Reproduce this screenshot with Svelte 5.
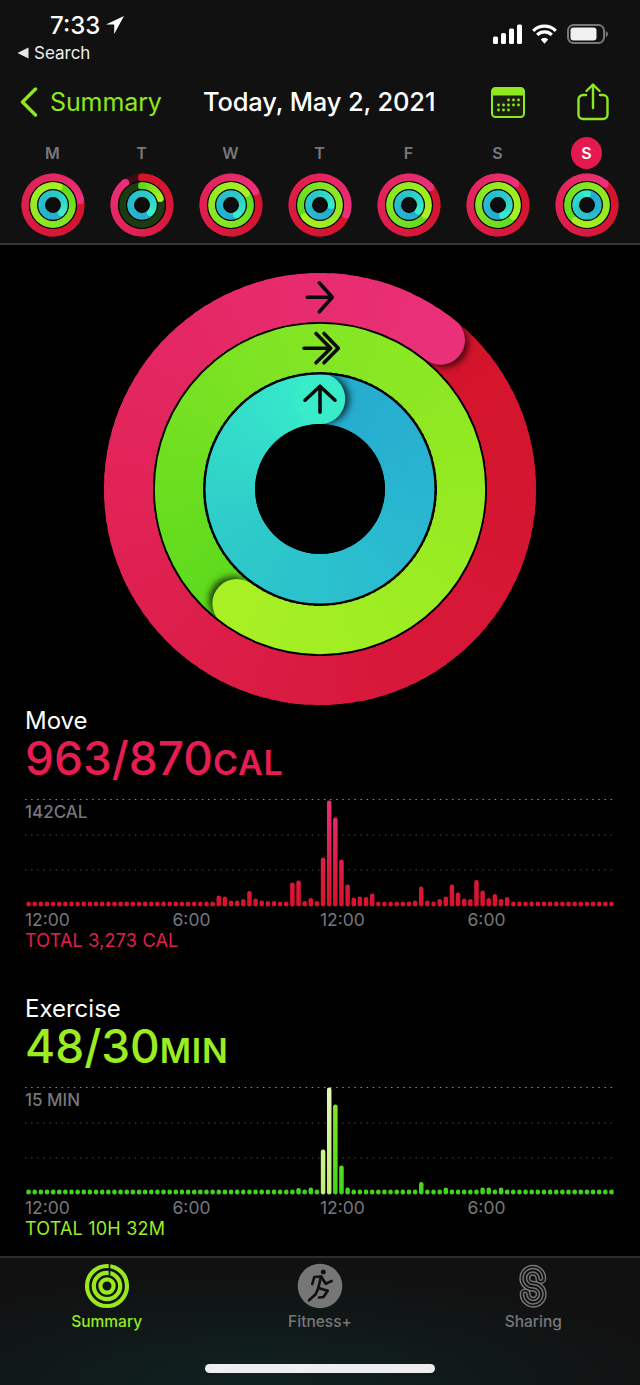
<script>
  const RED = ['#d3142a', '#d7183a', '#e2245a', '#ea3079'];
  const GREEN = ['#5cd91c', '#7fe424', '#96ea22', '#a8f024'];
  const CYAN = ['#26aacf', '#29b9d0', '#2ecac9', '#38ecca'];

  const hex = (c) => [1, 3, 5].map((i) => parseInt(c.slice(i, i + 2), 16));

  function mix(stops, u) {
    const p = Math.min(0.9999, Math.max(0, u)) * (stops.length - 1);
    const i = Math.floor(p);
    const a = hex(stops[i]);
    const b = hex(stops[i + 1]);
    const c = a.map((v, k) => Math.round(v + (b[k] - v) * (p - i)));
    return `rgb(${c.join(',')})`;
  }

  function point(r, deg) {
    const t = ((deg - 90) * Math.PI) / 180;
    return [r * Math.cos(t), r * Math.sin(t)];
  }

  function arc(r, a, b) {
    const [x1, y1] = point(r, a);
    const [x2, y2] = point(r, b);
    return `M${x1.toFixed(2)} ${y1.toFixed(2)}A${r} ${r} 0 0 1 ${x2.toFixed(2)} ${y2.toFixed(2)}`;
  }

  // Turn one ring into coloured slices, oldest first, so the head sits on top
  function slices(ring, step) {
    const from = ring.partial ? 0 : ring.end - 360;
    const span = ring.end - from;
    const out = [];
    for (let a = from; a < ring.end; a += step) {
      // each slice runs on under the next one, that hides the seams
      const b = Math.min(a + step * 1.5, ring.end);
      out.push({ d: arc(ring.r, a, b), color: mix(ring.stops, (a - from) / span), a });
    }
    const [hx, hy] = point(ring.r, ring.end);
    const [tx, ty] = point(ring.r, from);
    const [sx, sy] = point(ring.r, ring.end + (5 / ring.r) * (180 / Math.PI));
    return {
      older: out.filter((s) => s.a < ring.end - 50),
      newer: out.filter((s) => s.a >= ring.end - 50),
      head: { x: hx, y: hy, color: mix(ring.stops, 1) },
      tail: { x: tx, y: ty, color: mix(ring.stops, 0) },
      shade: { x: sx, y: sy },
    };
  }

  function smallRings(move, exercise, stand, moveFull = true, exerciseFull = true) {
    return [
      { r: 27.6, w: 7.8, end: move, stops: RED, partial: !moveFull, track: '#3a0c14' },
      { r: 19.3, w: 7.8, end: exercise, stops: GREEN, partial: !exerciseFull, track: '#1d3a10' },
      { r: 11.3, w: 7.8, end: stand, stops: CYAN },
    ];
  }

  const bigRings = [
    { r: 191.5, w: 49, end: 39, stops: RED },
    { r: 141.5, w: 49, end: 216, stops: GREEN },
    { r: 90.2, w: 50.5, end: 0, stops: CYAN },
  ];

  const days = [
    { label: 'M', rings: smallRings(80, 17, 130) },
    { label: 'T', rings: smallRings(323, 69, 130, false, false) },
    { label: 'W', rings: smallRings(61, 52, 148) },
    { label: 'T', rings: smallRings(110, 231, 90) },
    { label: 'F', rings: smallRings(50, 120, 120) },
    { label: 'S', rings: smallRings(39, 125, 153) },
    { label: 'S', rings: smallRings(40, 216, 0), today: true },
  ];

  const moveBars = {
    31: 11, 32: 10, 33: 6, 34: 6, 35: 7.5, 36: 15.5, 37: 8, 38: 6, 39: 5.5, 40: 5.5,
    43: 24, 44: 26, 45: 5.5, 46: 8.5, 47: 5.5, 48: 49, 49: 106, 50: 89, 51: 47, 52: 22,
    53: 9, 54: 10, 55: 9.5, 56: 13, 63: 6, 64: 20, 65: 6, 67: 7.5, 68: 10, 69: 22, 70: 14,
    71: 8, 72: 7.5, 73: 26.5, 74: 16, 75: 8.5, 76: 12.5, 77: 7.5, 78: 9.5,
  };
  const exerciseBars = {
    44: 6.5, 46: 7, 48: 45, 49: 107, 50: 90, 51: 29, 52: 7, 64: 12.5, 68: 7, 74: 7, 75: 7, 77: 7,
  };

  const stats = [
    {
      id: 'move', title: 'Move', value: '963/870', unit: 'CAL', peak: '142CAL', total: 'TOTAL 3,273 CAL',
      bars: moveBars, highlight: [], stops: ['#ea3079', '#e0204c', '#d8122a'],
    },
    {
      id: 'exercise', title: 'Exercise', value: '48/30', unit: 'MIN', peak: '15 MIN', total: 'TOTAL 10H 32M',
      bars: exerciseBars, highlight: [48, 49], stops: ['#8fe925', '#6ae021', '#3fd41e'],
    },
  ];

  const hours = ['12:00', '6:00', '12:00', '6:00'];
  const slots = Array.from({ length: 96 }, (_, i) => i);
</script>

{#snippet ringSet(rings, step, shadow, id)}
  {#each rings as ring, n}
    {@const s = slices(ring, step)}
    {#if ring.partial}
      <circle r={ring.r} fill="none" stroke={ring.track} stroke-width={ring.w} />
      <circle cx={s.tail.x} cy={s.tail.y} r={ring.w / 2} fill={s.tail.color} />
    {/if}
    {#each s.older as part}
      <path d={part.d} fill="none" stroke={part.color} stroke-width={ring.w} />
    {/each}
    {#if shadow}
      <clipPath id="{id}-{n}">
        <path
          clip-rule="evenodd"
          d="M{-ring.r - ring.w / 2} 0a{ring.r + ring.w / 2} {ring.r + ring.w / 2} 0 1 0 {2 * ring.r + ring.w} 0a{ring.r + ring.w / 2} {ring.r + ring.w / 2} 0 1 0 {-2 * ring.r - ring.w} 0zM{-ring.r + ring.w / 2} 0a{ring.r - ring.w / 2} {ring.r - ring.w / 2} 0 1 0 {2 * ring.r - ring.w} 0a{ring.r - ring.w / 2} {ring.r - ring.w / 2} 0 1 0 {-2 * ring.r + ring.w} 0z"
        />
      </clipPath>
      <g clip-path="url(#{id}-{n})">
        <circle cx={s.shade.x} cy={s.shade.y} r={ring.w / 2 - 1} fill="#000" opacity="0.75" filter="url(#soft)" />
      </g>
    {/if}
    {#each s.newer as part}
      <path d={part.d} fill="none" stroke={part.color} stroke-width={ring.w} />
    {/each}
    <circle cx={s.head.x} cy={s.head.y} r={ring.w / 2} fill={s.head.color} />
  {/each}
{/snippet}

<div class="page">
  <header>
    <div class="status">
      <div class="status-left">
        <div class="time">
          <span>7:33</span>
          <svg width="18" height="18" viewBox="0 0 18 18"><path d="M18 0 0 8.400h8.200V18z" fill="#fff" /></svg>
        </div>
        <div class="back">
          <svg width="12" height="12" viewBox="0 0 12 12"><path d="M11.500 .5v11L.5 6z" fill="#e8e8e8" /></svg>
          <span>Search</span>
        </div>
      </div>
      <div class="status-right">
        <svg width="29" height="20" viewBox="0 0 29 20" fill="#fff">
          <rect x="0" y="12.500" width="5" height="7.500" rx="1.500" />
          <rect x="8" y="9" width="5" height="11" rx="1.500" />
          <rect x="16" y="4.500" width="5" height="15.500" rx="1.500" />
          <rect x="24" y="0.500" width="5" height="19.500" rx="1.500" />
        </svg>
        <svg width="25" height="20" viewBox="0 0 25 20" fill="none" stroke="#fff" stroke-width="3.200">
          <path d="M1.200 6.800a16 16 0 0 1 22.600 0" />
          <path d="M5.200 10.900a10.400 10.400 0 0 1 14.600 0" />
          <path d="M12.500 19.700 8.800 15.400a5.200 5.200 0 0 1 7.400 0z" fill="#fff" stroke="none" />
        </svg>
        <svg width="41" height="20" viewBox="0 0 41 20" fill="none">
          <rect x="1" y="1" width="36" height="18" rx="5.500" stroke="#77777a" stroke-width="2" />
          <rect x="3.500" y="3.500" width="26" height="13" rx="3" fill="#f0f0f0" />
          <path d="M38.800 7v6c1.300-.5 2.200-1.700 2.200-3s-.9-2.500-2.200-3z" fill="#77777a" />
        </svg>
      </div>
    </div>

    <nav>
      <svg class="chevron" width="18" height="30" viewBox="0 0 18 30" fill="none" stroke="#8fe81f" stroke-width="3.400" stroke-linecap="round" stroke-linejoin="round">
        <path d="M15.500 2 2.500 15l13 13" />
      </svg>
      <span class="nav-back">Summary</span>
      <span class="nav-date">Today, May 2, 2021</span>
      <svg class="calendar" width="34" height="31" viewBox="0 0 34 31">
        <rect x="1" y="1" width="32" height="29" rx="3.500" fill="#1a2010" stroke="#8fe81f" stroke-width="2" />
        <path d="M1 8.500V4.500A3.500 3.500 0 0 1 4.500 1h25A3.500 3.500 0 0 1 33 4.500v4z" fill="#8fe81f" />
        {#each [13, 18, 23] as y, row}
          {#each [0, 1, 2, 3, 4] as c}
            {#if !(row === 0 && c < 2) && !(row === 2 && c > 2)}
              <circle cx={7.500 + c * 5} cy={y} r="1.400" fill="#8fe81f" />
            {/if}
          {/each}
        {/each}
      </svg>
      <svg class="share" width="32" height="38" viewBox="0 0 32 38" fill="none" stroke="#8fe81f" stroke-width="2.400" stroke-linecap="round" stroke-linejoin="round">
        <path d="M9 12H6a4.500 4.500 0 0 0-4.500 4.500v15A4.500 4.500 0 0 0 6 36h20a4.500 4.500 0 0 0 4.500-4.500v-15A4.500 4.500 0 0 0 26 12h-3" />
        <path d="M16 25V2M9.500 8 16 1.500 22.500 8" />
      </svg>
    </nav>

    <div class="week">
      {#each days as day, d}
        <div class="day">
          <span class="letter" class:today={day.today}>{day.label}</span>
          <svg width="64" height="64" viewBox="-32 -32 64 64">
            {@render ringSet(day.rings, 6, false, `day${d}`)}
            <g fill="none" stroke="#000">
              <circle r="23.500" stroke-width="1.200" />
              <circle r="15.400" stroke-width="1.200" />
              <circle r="7.300" stroke-width="1.200" fill="#0d0d0d" />
            </g>
          </svg>
        </div>
      {/each}
    </div>
  </header>

  <main>
    <svg class="activity" width="436" height="436" viewBox="-218 -218 436 436">
      <defs>
        <filter id="soft" x="-50%" y="-50%" width="200%" height="200%">
          <feGaussianBlur stdDeviation="3.500" />
        </filter>
      </defs>
      {@render ringSet(bigRings, 3, true, 'big')}
      <g fill="none" stroke="#000" stroke-width="1.700">
        <circle r="166" />
        <circle r="115.300" />
      </g>
      <circle r="65" fill="#000" />
      <g fill="none" stroke="#0a0a0a" stroke-width="3.600" stroke-linecap="round" stroke-linejoin="round">
        <path d="M-12.700-191.800H12.300M-.7-206.200 12.300-191.800-.7-177.200" />
        <path d="M-16-140.800H10M-4-155.500 10.700-140.800-4-126.200M4-155.500 18.300-140.800 4-126.200" />
        <path d="M0-76.800V-102.800M-15-88.800 0-102.800 15-88.800" />
      </g>
    </svg>

    {#each stats as stat}
      <section class={stat.id}>
        <h2>{stat.title}</h2>
        <div class="value">{stat.value}<span class="unit">{stat.unit}</span></div>
        <div class="chart">
          <svg width="590" height="115" viewBox="0 0 590 115">
            <defs>
              <linearGradient id="{stat.id}-bar" gradientUnits="userSpaceOnUse" x1="0" y1="4" x2="0" y2="112">
                <stop offset="0" stop-color={stat.stops[0]} />
                <stop offset="0.5" stop-color={stat.stops[1]} />
                <stop offset="1" stop-color={stat.stops[2]} />
              </linearGradient>
              <linearGradient id="{stat.id}-hot" gradientUnits="userSpaceOnUse" x1="0" y1="4" x2="0" y2="112">
                <stop offset="0" stop-color="#e4f8b8" />
                <stop offset="1" stop-color="#bdee74" />
              </linearGradient>
            </defs>
            <line class="grid strong" x1="0" x2="590" y1="4.500" y2="4.500" />
            <line class="grid" x1="0" x2="590" y1="40" y2="40" />
            <line class="grid" x1="0" x2="590" y1="75" y2="75" />
            {#each slots as i}
              {@const h = stat.bars[i] ?? 5}
              <rect
                x={1.300 + i * 6.136}
                y={111.500 - h}
                width="4.500"
                height={h}
                rx="2.200"
                fill="url(#{stat.id}-{stat.highlight.includes(i) ? 'hot' : 'bar'})"
              />
            {/each}
          </svg>
          <span class="peak">{stat.peak}</span>
        </div>
        <div class="hours">
          {#each hours as hour}
            <span>{hour}</span>
          {/each}
        </div>
        <div class="total">{stat.total}</div>
      </section>
    {/each}
  </main>

  <footer>
    <div class="tabs">
      <div class="tab active">
        <svg width="46" height="46" viewBox="-23 -23 46 46" fill="none" stroke="#98ea1e" stroke-width="4.200">
          <circle r="20" />
          <circle r="13.200" />
          <circle r="6.600" />
          <path d="M2.500-23V-9" stroke="#101414" stroke-width="1.600" />
        </svg>
        <span>Summary</span>
      </div>
      <div class="tab">
        <svg width="46" height="46" viewBox="-23 -23 46 46">
          <circle r="22.300" fill="#767676" />
          <circle cx="3.300" cy="-14" r="2.500" fill="#101010" />
          <g fill="none" stroke="#101010" stroke-width="2.700" stroke-linecap="round" stroke-linejoin="round">
            <path d="M1-9.500-1.700 2-4.300 8.300-11 14.300" />
            <path d="M1-9.500-5.700-9-7.700-2" />
            <path d="M1.500-9 5.700-2.300 11.700-5" />
            <path d="M-1.500 2 7.700 4.800 3.500 11-1 11.500" />
          </g>
        </svg>
        <span>Fitness+</span>
      </div>
      <div class="tab">
        <svg width="46" height="46" viewBox="-23 -23 46 46" fill="none" stroke-linecap="round">
          {#each [[11, '#767676'], [8, '#101010'], [5, '#767676'], [2, '#101010']] as [width, color]}
            <path d="M7.800-7.500A8 8 0 1 0 0 .2 8 8 0 1 1-7.800 8" stroke={color} stroke-width={width} />
          {/each}
        </svg>
        <span>Sharing</span>
      </div>
    </div>
    <div class="home"></div>
  </footer>
</div>

<style>
  :global(body) {
    background: #000;
  }

  .page {
    width: 640px;
    height: 1385px;
    display: flex;
    flex-direction: column;
    overflow: hidden;
    background: #000;
    color: #fff;
    font-family: Inter, 'Liberation Sans', sans-serif;
  }

  header {
    background: #111;
    border-bottom: 2px solid #38383a;
  }

  svg {
    display: block;
  }

  .status {
    height: 68px;
    display: flex;
    justify-content: space-between;
  }

  .status-left {
    padding-left: 17px;
  }

  .time {
    margin: 12px 0 0 33px;
    display: flex;
    align-items: center;
    gap: 6px;
    height: 26px;
    font-size: 24px;
    font-weight: 500;
  }

  .back {
    margin-top: 5px;
    display: flex;
    align-items: center;
    gap: 5px;
    height: 20px;
    font-size: 17px;
    color: #eee;
  }

  .status-right {
    display: flex;
    gap: 10px;
    padding: 24px 32px 0 0;
  }

  nav {
    height: 68px;
    display: flex;
    align-items: center;
    padding-left: 20px;
  }

  .nav-back {
    margin-left: 12px;
    width: 153px;
    font-size: 25px;
    letter-spacing: -0.1px;
    color: #8fe81f;
  }

  .nav-date {
    width: 288px;
    margin-top: -2px;
    font-size: 25.500px;
    letter-spacing: -0.15px;
    font-weight: 500;
  }

  .share {
    margin: -1px 0 0 52px;
  }

  .week {
    display: grid;
    grid-template-columns: repeat(7, 89px);
    padding: 0 0 6px 8px;
  }

  .day {
    display: flex;
    flex-direction: column;
    align-items: center;
    gap: 4px;
  }

  .letter {
    width: 31px;
    height: 32px;
    margin-top: 1px;
    line-height: 32px;
    text-align: center;
    border-radius: 50%;
    font-size: 16px;
    font-weight: 600;
    color: #77777c;
  }

  .letter.today {
    background: #e6194f;
    color: #fff;
  }

  main {
    flex: 1;
    overflow: hidden;
  }

  .activity {
    margin: 26px auto 0;
  }

  section {
    padding-left: 25px;
  }

  section.exercise {
    margin-top: 43px;
  }

  h2 {
    margin: 0;
    height: 28px;
    line-height: 28px;
    font-size: 24px;
    font-weight: 400;
  }

  .value {
    height: 46px;
    line-height: 46px;
    font-size: 46px;
    font-weight: 500;
  }

  .unit {
    font-size: 34px;
    font-weight: 600;
    letter-spacing: 0.8px;
  }

  .move .value,
  .move .total {
    color: #e61d50;
  }

  .exercise .value,
  .exercise .total {
    color: #9cec22;
  }

  .chart {
    position: relative;
    width: 590px;
    margin-top: 14px;
  }

  .grid {
    stroke: #4a4a4a;
    stroke-width: 1;
    stroke-dasharray: 1.500 4.600;
  }

  .grid.strong {
    stroke: #8a8a8a;
  }

  .peak {
    position: absolute;
    left: 0;
    top: 8px;
    line-height: 18px;
    font-size: 17px;
    font-weight: 500;
    color: #77777c;
  }

  .hours {
    width: 590px;
    display: grid;
    grid-template-columns: repeat(4, 1fr);
    height: 20px;
    line-height: 20px;
    font-size: 17.500px;
    color: #77777c;
  }

  .total {
    height: 22px;
    line-height: 22px;
    font-size: 18px;
    letter-spacing: 0.2px;
  }

  footer {
    border-top: 2px solid #2c2c2e;
    background: radial-gradient(ellipse 420px 110px at 260px 125px, #0f2221, #111 100%);
  }

  .tabs {
    display: grid;
    grid-template-columns: repeat(3, 1fr);
    padding-top: 5px;
  }

  .tab {
    display: flex;
    flex-direction: column;
    align-items: center;
    gap: 4px;
    font-size: 15.500px;
    font-weight: 500;
    line-height: 18px;
    color: #77777a;
  }

  .tab.active {
    color: #98ea1e;
  }

  .home {
    width: 230px;
    height: 9px;
    margin: 33px auto 12px;
    border-radius: 5px;
    background: #eee;
  }
</style>
